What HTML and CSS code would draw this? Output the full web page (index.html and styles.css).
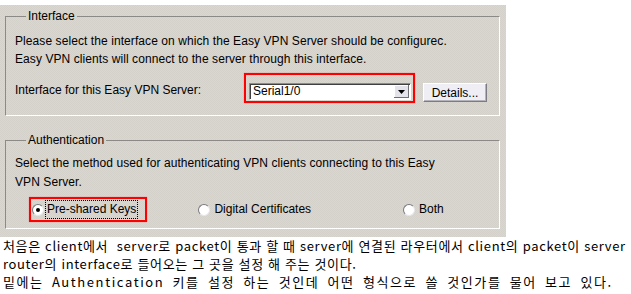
FILE: index.html
```html
<!DOCTYPE html>
<html lang="ko">
  <head>
    <meta charset="UTF-8" />
    <title>Easy VPN Server</title>
    <link rel="stylesheet" href="styles.css">
  </head>
  <body>
    <div class="panel">
      <fieldset class="group group-iface">
        <legend>Interface</legend>
        <p class="desc">
          Please select the interface on which the Easy VPN Server should be configurec.<br />
          Easy VPN clients will connect to the server through this interface.
        </p>
        <div class="iface-row">
          <span class="label">Interface for this Easy VPN Server:</span>
          <div class="mark mark-select">
            <div class="combo">
              <span class="combo-value">Serial1/0</span>
              <span class="combo-btn">
                <svg width="7" height="4" viewBox="0 0 7 4"><path d="M0 0h7L3.5 4z" fill="#000" /></svg>
              </span>
            </div>
          </div>
          <button class="btn">Details...</button>
        </div>
      </fieldset>

      <fieldset class="group group-auth">
        <legend>Authentication</legend>
        <p class="desc desc-auth">
          Select the method used for authenticating VPN clients connecting to this Easy<br />
          VPN Server.
        </p>
        <div class="radio-row">
          <div class="mark mark-radio">
            <span class="radio checked"></span>
            <span class="radio-text focused">Pre-shared Keys</span>
          </div>
          <div class="option option-cert">
            <span class="radio"></span>
            <span class="radio-text">Digital Certificates</span>
          </div>
          <div class="option option-both">
            <span class="radio"></span>
            <span class="radio-text">Both</span>
          </div>
        </div>
      </fieldset>
    </div>

    <div class="note">
      <p>처음은 client에서 &nbsp;server로 packet이 통과 할 때 server에 연결된 라우터에서 client의 packet이 server</p>
      <p>router의 interface로 들어오는 그 곳을 설정 해 주는 것이다.</p>
      <p class="note-wide">밑에는 Authentication 키를 설정 하는 것인데 어떤 형식으로 쓸 것인가를 물어 보고 있다.</p>
    </div>
  </body>
</html>
```

FILE: styles.css
```css
body {
  margin: 0;
  background: #fff;
  font-family: "Liberation Sans", Arial, sans-serif;
  font-size: 12px;
  color: #000;
}

.panel {
  width: 495px;
  margin-top: 5px;
  padding: 4px 6px 8px 5px;
  background-color: #d6d2cc;
  background-image: repeating-conic-gradient(#d4d0ca 0 25%, #dad6d0 0 50%);
  background-size: 2px 2px;
}

.group {
  margin: 0;
  padding: 9px 9px 12px 9px;
  border: 1px solid;
  border-color: #8c8a86 #fff #fff #8c8a86;
}

.group legend {
  margin-left: 11px;
  padding: 0 2px;
  line-height: 14px;
}

.group-auth {
  margin-top: 17px;
  padding-top: 7px;
  padding-bottom: 6px;
}

.desc {
  margin: 0;
  line-height: 18px;
  letter-spacing: 0.08px;
}

.desc-auth {
  line-height: 19px;
}

.iface-row {
  display: flex;
  align-items: flex-start;
  margin-top: 5px;
}

.label {
  width: 229px;
  margin-top: 10px;
  line-height: 14px;
}

.mark {
  border: 2px solid #f00;
  box-shadow: 0 0 1px #f66;
}

.mark-select {
  padding: 8px 2px 1px 3px;
}

.combo {
  width: 158px;
  height: 13px;
  display: flex;
  justify-content: space-between;
  padding: 1px;
  background: #fff;
  border: 1px solid;
  border-color: #8d8b8f #fff #fff #8d8b8f;
  box-shadow: inset 1px 1px 0 #404040;
}

.combo-value {
  padding-left: 2px;
  line-height: 13px;
}

.combo-btn {
  width: 15px;
  height: 13px;
  display: flex;
  align-items: center;
  justify-content: center;
  background: #e4e2ea;
  box-shadow: inset -1px -1px 0 #6f6d75, inset 1px 1px 0 #fff;
}

.btn {
  width: 64px;
  height: 19px;
  margin: 10px 0 0 8px;
  padding: 0;
  font: inherit;
  background: #efeef5;
  border: 1px solid;
  border-color: #fff #7c7a82 #7c7a82 #fff;
  box-shadow: inset -1px -1px 0 #b4b2ba;
}

.radio-row {
  display: flex;
  align-items: center;
  margin: 5px 0 0 14px;
}

.mark-radio {
  display: flex;
  align-items: center;
  padding: 1px 7px 1px 1px;
}

.radio {
  width: 10px;
  height: 10px;
  border-radius: 50%;
  background: #fff;
  border: 1px solid;
  border-color: #7a7880 #e8e6ea #e8e6ea #7a7880;
  position: relative;
}

.radio.checked::after {
  content: "";
  position: absolute;
  left: 3px;
  top: 3px;
  width: 4px;
  height: 4px;
  border-radius: 50%;
  background: #000;
}

.radio-text {
  margin-left: 4px;
  line-height: 17px;
}

.radio-text.focused {
  margin-left: 1px;
  padding: 0 1px;
  border: 1px dotted #000;
}

.option {
  display: flex;
  align-items: center;
}

.option-cert {
  margin-left: 51px;
}

.option-both {
  margin-left: 92px;
}

.note {
  padding-left: 3px;
  font-family: "Noto Sans CJK KR", "Liberation Sans", sans-serif;
  font-size: 13px;
  letter-spacing: 0.65px;
  line-height: 18px;
}

.note p {
  margin: 0;
  white-space: nowrap;
}

.note-wide {
  letter-spacing: 1.6px;
  word-spacing: 3px;
}
```
